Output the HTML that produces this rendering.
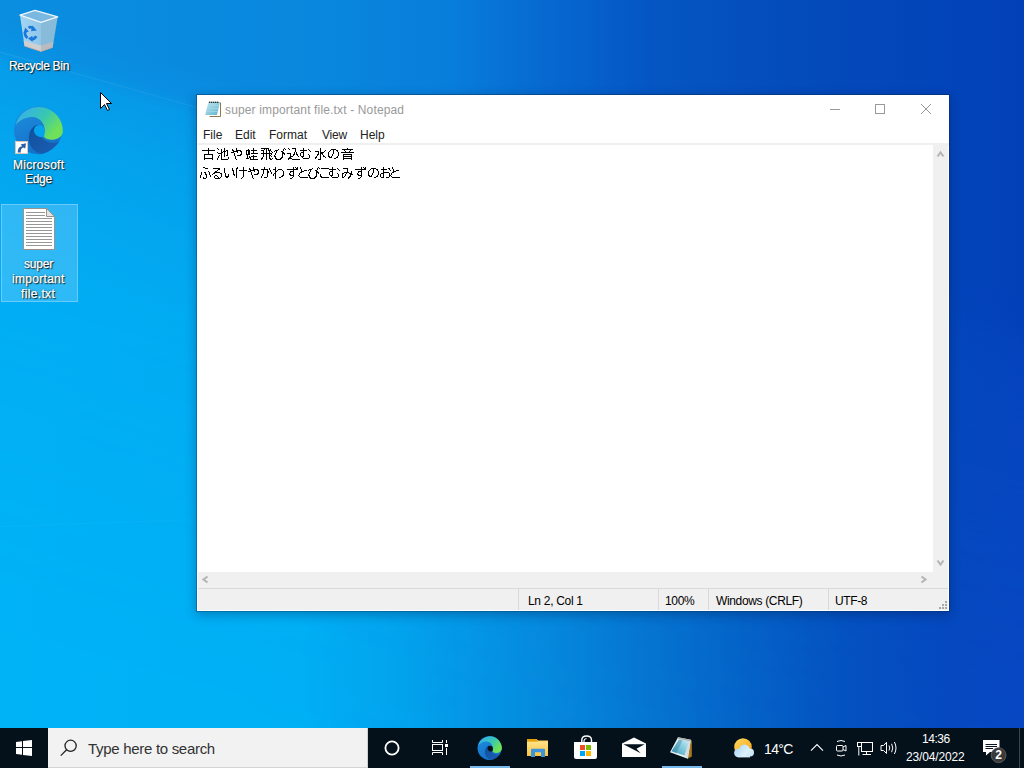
<!DOCTYPE html>
<html><head><meta charset="utf-8">
<style>
*{margin:0;padding:0;box-sizing:border-box}
html,body{width:1024px;height:768px;overflow:hidden}
body{position:relative;font-family:"Liberation Sans",sans-serif;background:#0343b5}
.a{position:absolute}
#wb{position:absolute;left:0;top:0;width:1024px;height:728px;background:linear-gradient(90deg,#00b3f7 0px,#01b0f5 300px,#03a4ee 400px,#0596e6 480px,#0688dc 560px,#0676d2 650px,#0563c8 750px,#0552c2 850px,#0649c0 950px,#0848c4 1024px)}
#wt{position:absolute;left:0;top:0;width:1024px;height:728px;background:linear-gradient(90deg,#0a8ee0 0px,#0988de 300px,#087edb 450px,#0668d0 550px,#0556c4 650px,#044bbb 800px,#0240b8 1024px);-webkit-mask-image:linear-gradient(195.6deg,#000 0px,#000 290px,rgba(0,0,0,.9) 318px,rgba(0,0,0,.62) 336px,rgba(0,0,0,.42) 390px,rgba(0,0,0,.15) 535px,rgba(0,0,0,.05) 720px,rgba(0,0,0,0) 900px);mask-image:linear-gradient(195.6deg,#000 0px,#000 290px,rgba(0,0,0,.9) 318px,rgba(0,0,0,.62) 336px,rgba(0,0,0,.42) 390px,rgba(0,0,0,.15) 535px,rgba(0,0,0,.05) 720px,rgba(0,0,0,0) 900px)}
.lbl{position:absolute;color:#fff;font-size:12px;text-align:center;white-space:nowrap;-webkit-text-stroke:.25px #fff;text-shadow:1px 1px 1px rgba(0,0,0,.9),0 0 2px rgba(0,0,0,.6)}

#taskbar{position:absolute;left:0;top:728px;width:1024px;height:40px;background:#04111b}
.t{position:absolute;white-space:nowrap}
</style></head><body>
<div id="wb"></div><div id="wt"></div>
<div class="a" style="left:-20px;top:46px;width:700px;height:1px;background:linear-gradient(90deg,rgba(255,255,255,.07),rgba(255,255,255,.05) 40%,rgba(255,255,255,0));transform-origin:0 0;transform:rotate(15.7deg)"></div>
<div class="a" style="left:0;top:526px;width:600px;height:1px;background:linear-gradient(90deg,rgba(255,255,255,.03),rgba(255,255,255,.02) 60%,rgba(255,255,255,0));transform-origin:0 0;transform:rotate(-2deg)"></div>

<div class="a" style="left:1px;top:204px;width:77px;height:98px;background:rgba(153,217,255,.30);border:1px solid rgba(153,217,255,.55)"></div>
<!-- desktop labels -->
<svg class="a" style="left:0;top:0" width="200" height="320" viewBox="0 0 200 320">
 <defs>
  <linearGradient id="eg" x1="0.15" y1="0.05" x2="0.95" y2="0.55"><stop offset="0" stop-color="#36b0ea"/><stop offset=".55" stop-color="#38c8b0"/><stop offset="1" stop-color="#6ee05a"/></linearGradient>
  <linearGradient id="eb" x1="0" y1="0" x2="0.4" y2="1"><stop offset="0" stop-color="#1e90e0"/><stop offset="1" stop-color="#1470c8"/></linearGradient>
  <linearGradient id="ed" x1="0" y1="0" x2="1" y2="1"><stop offset="0" stop-color="#114f9c"/><stop offset="1" stop-color="#1b5fb5"/></linearGradient>
  <mask id="ehole">
   <rect x="-2" y="-2" width="52" height="52" fill="#fff"/>
   <path d="M19 24.5 A5.4 5.3 0 0 1 29.6 23.2 C30 27 29.6 29.8 28.2 31.2 C23.5 31.5 19 29 19 24.5 Z" fill="#000"/>
  </mask>
  
  <linearGradient id="rbl" x1="0" y1="0" x2="1" y2="0"><stop offset="0" stop-color="#b2dcf4"/><stop offset="1" stop-color="#9ccbea"/></linearGradient>
 </defs>
 <!-- recycle bin -->
 <path d="M20 15.2 L41 22.3 L41 51.4 L24.5 46 Z" fill="url(#rbl)" opacity=".92"/>
 <path d="M41 22.3 L57.7 16.9 L52.6 47.4 L41 51.4 Z" fill="#8fbdd9" opacity=".95"/>
 <path d="M20 15.2 L35 10.4 L57.7 16.9 L41 22.3 Z" fill="#79b8e0"/>
 <path d="M23.6 40.5 L41 45.5 L41 51.4 L24.5 46 Z" fill="#cdcfd2"/>
 <path d="M41 45.5 L53.4 41.8 L52.6 47.4 L41 51.4 Z" fill="#b8bcc0"/>
 <path d="M24.5 46 L41 51.4 L52.6 47.4" fill="none" stroke="#c8a898" stroke-width=".8"/>
 <path d="M20 15.2 L35 10.4 L57.7 16.9 L41 22.3 Z" fill="none" stroke="#eef6fb" stroke-width="1.3" stroke-linejoin="round"/>
 <g fill="none" stroke="#1a78dc" stroke-width="2.6" stroke-linejoin="round">
  <path d="M28.5 27.8 Q31 26 33.2 28.6"/>
  <path d="M25.3 31.5 Q24.2 35.5 27.6 37.8"/>
  <path d="M31 39.4 Q34.5 39.6 36.2 36.2"/>
 </g>
 <g fill="#1a78dc"><path d="M32.6 25.6 L36.8 30.6 L31 31.2 Z"/><path d="M23.4 33.6 L25.2 27.6 L28.8 31.6 Z"/><path d="M32.5 35.8 L32.6 41.8 L28 38.5 Z"/></g>
 <!-- edge desktop icon -->
 <g transform="translate(15 106)">
   <g mask="url(#ehole)">
    <path d="M43.9 36 A24 24 0 1 0 26.4 47.9 C34 46.5 40 41.5 43.9 36 Z" fill="url(#eb)"/>
    <path d="M0.5 19.4 A24 24 0 0 1 47.8 26.5 C46.5 31.5 41.5 34 36 33.8 C32 33.6 29.2 32 28.2 29.6 C29.8 26.5 30.5 22 28 17.8 C25 12.2 19.5 10.6 14.5 11.2 C8.5 12 3.5 15 0.5 19.4 Z" fill="url(#eg)"/>
    <path d="M20 19.5 C15.5 22.5 13.5 28 13.8 34 C14.3 40.5 19 46 26.4 47.9 C33 46.7 39.5 42 43.9 36 C39 37.6 33.5 37.3 29.5 34 C25 30.5 22.5 25.5 23.5 19 Z" fill="url(#ed)"/>
   </g>
  </g>
 <rect x="15.5" y="141.5" width="12" height="12" fill="#fff" stroke="#d9c6b6" stroke-width="1"/>
 <path d="M17.8 152.6 C17.6 148.5 19.5 146.6 22.2 146.2 L20.6 144.4 L26 143.2 L25.2 148.8 L23.8 147.6 C21.6 148 20.4 149.8 20.8 152.6 Z" fill="#2a5fa8"/>
 <!-- document -->
 <path d="M23.5 208.5 H46.5 L54.5 216.5 V249.5 H23.5 Z" fill="#fff" stroke="#9c928c" stroke-width="1"/>
 <path d="M46.5 208.5 V216.5 H54.5 Z" fill="#e4e4e4" stroke="#9c928c" stroke-width="1" stroke-linejoin="round"/>
 <g stroke="#979797" stroke-width="1.1">
  <path d="M26 212.5 H45 M26 215.5 H45 M26 218.5 H52 M26 221.5 H52 M26 224.5 H52 M26 227.5 H52 M26 230.5 H52 M26 233.5 H52 M26 236.5 H52 M26 239.5 H52 M26 242.5 H52 M26 245.5 H52"/>
 </g>
 <!-- cursor -->
 <path d="M100.5 92.5 V108.5 L104.5 104.5 L107.5 110.5 L109.5 109.5 L106.5 103.5 H111.5 Z" fill="#fff" stroke="#000" stroke-width="1" stroke-linejoin="miter"/>
</svg>

<div class="lbl t" style="left:9px;top:59px;letter-spacing:-.3px">Recycle Bin</div>
<div class="lbl t" style="left:13px;top:158px;letter-spacing:.3px">Microsoft</div>
<div class="lbl t" style="left:25px;top:172px;letter-spacing:-.3px">Edge</div>
<div class="lbl t" style="left:24px;top:257px;letter-spacing:-.2px">super</div>
<div class="lbl t" style="left:12px;top:272px;letter-spacing:.3px">important</div>
<div class="lbl t" style="left:21px;top:287px;letter-spacing:.35px">file.txt</div>


<div class="a" style="left:196px;top:94px;width:754px;height:518px;box-shadow:0 3px 10px rgba(0,20,60,.30)"></div>
<div class="a" style="left:196px;top:94px;width:754px;height:518px;border:1px solid rgba(0,30,70,.42);background:#fff;background-clip:padding-box"></div>
<div class="a" style="left:197px;top:143px;width:752px;height:2px;background:#f0f0f0"></div>
<div class="a" style="left:933px;top:145px;width:15px;height:443px;background:#f0f0f0"></div>
<div class="a" style="left:198px;top:572px;width:750px;height:16px;background:#f0f0f0"></div>
<div class="a" style="left:198px;top:588px;width:750px;height:1px;background:#d9d9d9"></div>
<div class="a" style="left:198px;top:589px;width:750px;height:21px;background:#f0f0f0"></div>
<div class="a" style="left:518px;top:589px;width:1px;height:21px;background:#d9d9d9"></div>
<div class="a" style="left:658px;top:589px;width:1px;height:21px;background:#d9d9d9"></div>
<div class="a" style="left:708px;top:589px;width:1px;height:21px;background:#d9d9d9"></div>
<div class="a" style="left:828px;top:589px;width:1px;height:21px;background:#d9d9d9"></div>
<svg class="a" style="left:0;top:0" width="1024" height="768" viewBox="0 0 1024 768">
 <g fill="none" stroke="#b4b4b4" stroke-width="2">
  <path d="M937.5 156.5 L940.5 152.5 L943.5 156.5"/>
  <path d="M937.5 560.5 L940.5 564.5 L943.5 560.5"/>
  <path d="M207.5 576.5 L203.5 579.5 L207.5 582.5"/>
  <path d="M921.5 576.5 L925.5 579.5 L921.5 582.5"/>
 </g>
 <g fill="#a8a8a8">
  <rect x="945" y="601" width="2" height="2"/>
  <rect x="942" y="604" width="2" height="2"/><rect x="945" y="604" width="2" height="2"/>
  <rect x="939" y="607" width="2" height="2"/><rect x="942" y="607" width="2" height="2"/><rect x="945" y="607" width="2" height="2"/>
 </g>
 <g fill="none" stroke="#999" stroke-width="1">
  <path d="M830 109.5 H840"/>
  <rect x="875.5" y="104.5" width="9" height="9"/>
  <path d="M921 104 L931 114 M931 104 L921 114"/>
 </g>
</svg>

<svg id="jp" class="a" style="left:0;top:0" width="1024" height="768" viewBox="0 0 1024 768" shape-rendering="crispEdges"><path fill="#000" d="M208 148h1v1h-1zM217 148h1v1h-1zM224 148h1v1h-1zM236 148h1v1h-1zM253 148h1v1h-1zM261 148h8v1h-8zM284 148h1v1h-1zM288 148h1v1h-1zM292 148h4v1h-4zM303 148h1v1h-1zM320 148h1v1h-1zM347 148h1v1h-1zM208 149h1v1h-1zM218 149h1v1h-1zM221 149h1v1h-1zM224 149h1v1h-1zM232 149h1v1h-1zM236 149h1v1h-1zM248 149h1v1h-1zM253 149h1v1h-1zM264 149h1v1h-1zM266 149h1v1h-1zM268 149h1v1h-1zM270 149h1v1h-1zM278 149h1v1h-1zM283 149h1v1h-1zM285 149h1v1h-1zM289 149h1v1h-1zM295 149h1v1h-1zM303 149h1v1h-1zM308 149h1v1h-1zM320 149h1v1h-1zM331 149h5v1h-5zM342 149h11v1h-11zM202 150h13v1h-13zM221 150h1v1h-1zM224 150h1v1h-1zM226 150h2v1h-2zM232 150h2v1h-2zM236 150h5v1h-5zM246 150h4v1h-4zM251 150h6v1h-6zM261 150h3v1h-3zM266 150h1v1h-1zM268 150h3v1h-3zM275 150h3v1h-3zM283 150h1v1h-1zM295 150h1v1h-1zM300 150h7v1h-7zM309 150h1v1h-1zM320 150h1v1h-1zM325 150h1v1h-1zM330 150h1v1h-1zM333 150h1v1h-1zM336 150h2v1h-2zM344 150h1v1h-1zM350 150h1v1h-1zM208 151h1v1h-1zM221 151h1v1h-1zM223 151h3v1h-3zM227 151h1v1h-1zM233 151h5v1h-5zM240 151h2v1h-2zM246 151h1v1h-1zM248 151h2v1h-2zM253 151h1v1h-1zM263 151h1v1h-1zM266 151h1v1h-1zM269 151h1v1h-1zM271 151h1v1h-1zM274 151h1v1h-1zM276 151h1v1h-1zM281 151h2v1h-2zM295 151h1v1h-1zM303 151h1v1h-1zM310 151h1v1h-1zM315 151h4v1h-4zM320 151h1v1h-1zM324 151h1v1h-1zM329 151h1v1h-1zM333 151h1v1h-1zM337 151h1v1h-1zM345 151h1v1h-1zM349 151h1v1h-1zM208 152h1v1h-1zM217 152h1v1h-1zM221 152h2v1h-2zM224 152h1v1h-1zM227 152h1v1h-1zM231 152h3v1h-3zM237 152h1v1h-1zM241 152h1v1h-1zM246 152h1v1h-1zM248 152h2v1h-2zM253 152h1v1h-1zM263 152h1v1h-1zM266 152h1v1h-1zM269 152h1v1h-1zM272 152h1v1h-1zM276 152h1v1h-1zM282 152h2v1h-2zM294 152h1v1h-1zM296 152h1v1h-1zM301 152h3v1h-3zM318 152h1v1h-1zM320 152h4v1h-4zM328 152h1v1h-1zM333 152h1v1h-1zM338 152h1v1h-1zM341 152h13v1h-13zM208 153h1v1h-1zM218 153h4v1h-4zM224 153h1v1h-1zM227 153h1v1h-1zM234 153h1v1h-1zM241 153h1v1h-1zM246 153h1v1h-1zM248 153h2v1h-2zM251 153h7v1h-7zM261 153h11v1h-11zM275 153h1v1h-1zM282 153h3v1h-3zM287 153h4v1h-4zM294 153h1v1h-1zM296 153h1v1h-1zM300 153h1v1h-1zM303 153h1v1h-1zM318 153h1v1h-1zM320 153h3v1h-3zM328 153h1v1h-1zM333 153h1v1h-1zM338 153h1v1h-1zM204 154h9v1h-9zM221 154h1v1h-1zM224 154h1v1h-1zM227 154h1v1h-1zM234 154h1v1h-1zM240 154h2v1h-2zM246 154h4v1h-4zM263 154h1v1h-1zM266 154h1v1h-1zM269 154h1v1h-1zM271 154h1v1h-1zM275 154h1v1h-1zM282 154h1v1h-1zM284 154h1v1h-1zM290 154h1v1h-1zM293 154h2v1h-2zM296 154h2v1h-2zM300 154h1v1h-1zM303 154h1v1h-1zM308 154h1v1h-1zM317 154h2v1h-2zM320 154h1v1h-1zM322 154h1v1h-1zM328 154h1v1h-1zM332 154h1v1h-1zM338 154h1v1h-1zM343 154h9v1h-9zM204 155h1v1h-1zM212 155h1v1h-1zM219 155h1v1h-1zM221 155h1v1h-1zM224 155h1v1h-1zM226 155h2v1h-2zM234 155h1v1h-1zM237 155h4v1h-4zM247 155h1v1h-1zM253 155h1v1h-1zM263 155h1v1h-1zM266 155h1v1h-1zM269 155h2v1h-2zM274 155h1v1h-1zM282 155h1v1h-1zM290 155h1v1h-1zM293 155h1v1h-1zM297 155h1v1h-1zM300 155h1v1h-1zM303 155h1v1h-1zM309 155h1v1h-1zM317 155h1v1h-1zM320 155h1v1h-1zM323 155h1v1h-1zM328 155h1v1h-1zM332 155h1v1h-1zM338 155h1v1h-1zM343 155h1v1h-1zM351 155h1v1h-1zM204 156h1v1h-1zM212 156h1v1h-1zM218 156h1v1h-1zM221 156h1v1h-1zM224 156h1v1h-1zM235 156h1v1h-1zM247 156h1v1h-1zM249 156h1v1h-1zM251 156h6v1h-6zM263 156h1v1h-1zM266 156h1v1h-1zM269 156h1v1h-1zM271 156h1v1h-1zM274 156h2v1h-2zM282 156h1v1h-1zM290 156h3v1h-3zM298 156h1v1h-1zM301 156h3v1h-3zM309 156h1v1h-1zM316 156h1v1h-1zM320 156h1v1h-1zM323 156h2v1h-2zM328 156h2v1h-2zM331 156h1v1h-1zM337 156h1v1h-1zM343 156h9v1h-9zM204 157h1v1h-1zM212 157h1v1h-1zM218 157h1v1h-1zM221 157h1v1h-1zM228 157h1v1h-1zM235 157h1v1h-1zM247 157h1v1h-1zM249 157h2v1h-2zM253 157h1v1h-1zM262 157h1v1h-1zM266 157h1v1h-1zM269 157h1v1h-1zM275 157h1v1h-1zM281 157h2v1h-2zM289 157h2v1h-2zM302 157h1v1h-1zM309 157h1v1h-1zM315 157h2v1h-2zM320 157h1v1h-1zM325 157h1v1h-1zM329 157h3v1h-3zM336 157h2v1h-2zM343 157h1v1h-1zM351 157h1v1h-1zM204 158h9v1h-9zM217 158h1v1h-1zM221 158h1v1h-1zM228 158h1v1h-1zM235 158h1v1h-1zM246 158h3v1h-3zM250 158h1v1h-1zM253 158h1v1h-1zM261 158h2v1h-2zM266 158h1v1h-1zM269 158h2v1h-2zM272 158h1v1h-1zM275 158h2v1h-2zM280 158h2v1h-2zM288 158h4v1h-4zM303 158h6v1h-6zM315 158h1v1h-1zM320 158h1v1h-1zM334 158h2v1h-2zM343 158h9v1h-9zM204 159h1v1h-1zM212 159h1v1h-1zM217 159h1v1h-1zM221 159h7v1h-7zM236 159h1v1h-1zM250 159h8v1h-8zM261 159h1v1h-1zM266 159h1v1h-1zM270 159h2v1h-2zM276 159h5v1h-5zM288 159h1v1h-1zM292 159h8v1h-8zM318 159h3v1h-3zM343 159h1v1h-1zM351 159h1v1h-1zM203 167h2v1h-2zM237 167h1v1h-1zM243 167h1v1h-1zM253 167h1v1h-1zM264 167h1v1h-1zM275 167h1v1h-1zM293 167h1v1h-1zM295 167h1v1h-1zM297 167h1v1h-1zM300 167h1v1h-1zM318 167h1v1h-1zM332 167h1v1h-1zM361 167h1v1h-1zM363 167h1v1h-1zM365 167h1v1h-1zM383 167h1v1h-1zM392 167h1v1h-1zM205 168h3v1h-3zM213 168h7v1h-7zM224 168h1v1h-1zM232 168h1v1h-1zM236 168h2v1h-2zM243 168h1v1h-1zM249 168h1v1h-1zM253 168h1v1h-1zM264 168h1v1h-1zM269 168h1v1h-1zM275 168h1v1h-1zM293 168h1v1h-1zM296 168h2v1h-2zM300 168h1v1h-1zM312 168h1v1h-1zM317 168h1v1h-1zM319 168h1v1h-1zM321 168h8v1h-8zM332 168h1v1h-1zM337 168h1v1h-1zM343 168h5v1h-5zM361 168h1v1h-1zM364 168h2v1h-2zM371 168h5v1h-5zM383 168h1v1h-1zM388 168h2v1h-2zM392 168h1v1h-1zM218 169h2v1h-2zM224 169h1v1h-1zM232 169h1v1h-1zM236 169h1v1h-1zM243 169h1v1h-1zM249 169h2v1h-2zM253 169h5v1h-5zM261 169h7v1h-7zM269 169h1v1h-1zM273 169h3v1h-3zM278 169h4v1h-4zM287 169h11v1h-11zM301 169h1v1h-1zM309 169h3v1h-3zM317 169h1v1h-1zM329 169h7v1h-7zM338 169h1v1h-1zM347 169h1v1h-1zM355 169h11v1h-11zM370 169h1v1h-1zM373 169h1v1h-1zM376 169h2v1h-2zM381 169h6v1h-6zM389 169h1v1h-1zM393 169h1v1h-1zM217 170h1v1h-1zM224 170h1v1h-1zM232 170h2v1h-2zM236 170h1v1h-1zM239 170h8v1h-8zM250 170h5v1h-5zM257 170h2v1h-2zM263 170h1v1h-1zM267 170h1v1h-1zM270 170h1v1h-1zM275 170h1v1h-1zM277 170h1v1h-1zM282 170h1v1h-1zM293 170h1v1h-1zM301 170h1v1h-1zM304 170h3v1h-3zM308 170h1v1h-1zM310 170h1v1h-1zM315 170h2v1h-2zM332 170h1v1h-1zM339 170h1v1h-1zM347 170h1v1h-1zM361 170h1v1h-1zM369 170h1v1h-1zM373 170h1v1h-1zM377 170h1v1h-1zM383 170h1v1h-1zM390 170h1v1h-1zM393 170h1v1h-1zM396 170h3v1h-3zM208 171h1v1h-1zM215 171h2v1h-2zM224 171h1v1h-1zM233 171h1v1h-1zM236 171h1v1h-1zM243 171h1v1h-1zM248 171h3v1h-3zM254 171h1v1h-1zM258 171h1v1h-1zM263 171h1v1h-1zM267 171h2v1h-2zM270 171h1v1h-1zM275 171h2v1h-2zM283 171h1v1h-1zM290 171h4v1h-4zM301 171h3v1h-3zM310 171h1v1h-1zM316 171h2v1h-2zM330 171h3v1h-3zM347 171h1v1h-1zM351 171h1v1h-1zM358 171h4v1h-4zM368 171h1v1h-1zM373 171h1v1h-1zM378 171h1v1h-1zM383 171h1v1h-1zM393 171h3v1h-3zM201 172h1v1h-1zM204 172h2v1h-2zM209 172h1v1h-1zM214 172h6v1h-6zM224 172h1v1h-1zM233 172h1v1h-1zM236 172h1v1h-1zM243 172h1v1h-1zM251 172h1v1h-1zM258 172h1v1h-1zM263 172h1v1h-1zM267 172h2v1h-2zM271 172h1v1h-1zM275 172h1v1h-1zM283 172h1v1h-1zM290 172h1v1h-1zM293 172h1v1h-1zM300 172h2v1h-2zM309 172h1v1h-1zM316 172h3v1h-3zM329 172h1v1h-1zM332 172h1v1h-1zM344 172h5v1h-5zM351 172h1v1h-1zM358 172h1v1h-1zM361 172h1v1h-1zM368 172h1v1h-1zM373 172h1v1h-1zM378 172h1v1h-1zM383 172h6v1h-6zM392 172h2v1h-2zM201 173h1v1h-1zM205 173h1v1h-1zM209 173h1v1h-1zM213 173h2v1h-2zM220 173h2v1h-2zM225 173h1v1h-1zM233 173h1v1h-1zM236 173h1v1h-1zM243 173h1v1h-1zM251 173h1v1h-1zM257 173h2v1h-2zM263 173h1v1h-1zM267 173h1v1h-1zM271 173h1v1h-1zM274 173h2v1h-2zM283 173h1v1h-1zM289 173h1v1h-1zM293 173h1v1h-1zM299 173h1v1h-1zM309 173h1v1h-1zM316 173h1v1h-1zM318 173h1v1h-1zM329 173h1v1h-1zM332 173h1v1h-1zM337 173h1v1h-1zM342 173h2v1h-2zM346 173h1v1h-1zM349 173h3v1h-3zM357 173h1v1h-1zM361 173h1v1h-1zM368 173h1v1h-1zM372 173h1v1h-1zM378 173h1v1h-1zM381 173h3v1h-3zM389 173h1v1h-1zM391 173h1v1h-1zM201 174h1v1h-1zM205 174h2v1h-2zM209 174h1v1h-1zM212 174h1v1h-1zM221 174h1v1h-1zM225 174h1v1h-1zM228 174h1v1h-1zM233 174h2v1h-2zM236 174h1v1h-1zM243 174h1v1h-1zM251 174h1v1h-1zM254 174h4v1h-4zM262 174h1v1h-1zM267 174h1v1h-1zM273 174h1v1h-1zM275 174h1v1h-1zM283 174h1v1h-1zM289 174h2v1h-2zM293 174h1v1h-1zM299 174h1v1h-1zM308 174h1v1h-1zM316 174h1v1h-1zM320 174h1v1h-1zM329 174h1v1h-1zM332 174h1v1h-1zM338 174h1v1h-1zM342 174h1v1h-1zM345 174h1v1h-1zM350 174h3v1h-3zM357 174h2v1h-2zM361 174h1v1h-1zM368 174h1v1h-1zM372 174h1v1h-1zM378 174h1v1h-1zM380 174h1v1h-1zM383 174h1v1h-1zM389 174h1v1h-1zM391 174h1v1h-1zM200 175h1v1h-1zM206 175h1v1h-1zM210 175h1v1h-1zM215 175h2v1h-2zM221 175h1v1h-1zM225 175h1v1h-1zM228 175h1v1h-1zM234 175h1v1h-1zM236 175h1v1h-1zM243 175h1v1h-1zM252 175h1v1h-1zM262 175h1v1h-1zM267 175h1v1h-1zM273 175h1v1h-1zM275 175h1v1h-1zM282 175h2v1h-2zM290 175h4v1h-4zM298 175h1v1h-1zM308 175h2v1h-2zM316 175h1v1h-1zM320 175h1v1h-1zM330 175h3v1h-3zM338 175h1v1h-1zM342 175h1v1h-1zM345 175h1v1h-1zM350 175h1v1h-1zM358 175h4v1h-4zM368 175h2v1h-2zM371 175h1v1h-1zM377 175h1v1h-1zM380 175h1v1h-1zM383 175h1v1h-1zM389 175h2v1h-2zM200 176h1v1h-1zM206 176h1v1h-1zM210 176h1v1h-1zM214 176h1v1h-1zM217 176h1v1h-1zM221 176h1v1h-1zM225 176h4v1h-4zM236 176h1v1h-1zM243 176h1v1h-1zM252 176h1v1h-1zM261 176h1v1h-1zM267 176h1v1h-1zM275 176h1v1h-1zM281 176h2v1h-2zM293 176h1v1h-1zM299 176h1v1h-1zM309 176h1v1h-1zM315 176h2v1h-2zM320 176h2v1h-2zM331 176h1v1h-1zM338 176h1v1h-1zM342 176h1v1h-1zM344 176h1v1h-1zM349 176h2v1h-2zM361 176h1v1h-1zM369 176h3v1h-3zM376 176h2v1h-2zM380 176h1v1h-1zM383 176h1v1h-1zM389 176h1v1h-1zM391 176h1v1h-1zM200 177h1v1h-1zM203 177h1v1h-1zM206 177h1v1h-1zM214 177h1v1h-1zM218 177h1v1h-1zM220 177h1v1h-1zM226 177h2v1h-2zM236 177h1v1h-1zM242 177h1v1h-1zM252 177h1v1h-1zM261 177h1v1h-1zM264 177h3v1h-3zM275 177h1v1h-1zM279 177h2v1h-2zM292 177h1v1h-1zM300 177h8v1h-8zM309 177h2v1h-2zM314 177h2v1h-2zM321 177h8v1h-8zM332 177h6v1h-6zM342 177h2v1h-2zM348 177h2v1h-2zM360 177h1v1h-1zM374 177h2v1h-2zM381 177h3v1h-3zM386 177h3v1h-3zM392 177h8v1h-8zM203 178h3v1h-3zM215 178h5v1h-5zM241 178h1v1h-1zM253 178h1v1h-1zM275 178h1v1h-1zM290 178h2v1h-2zM310 178h5v1h-5zM348 178h1v1h-1zM358 178h2v1h-2z"/></svg>
<svg class="a" style="left:200px;top:98px" width="24" height="22" viewBox="200 98 24 22">
 <defs><linearGradient id="npt" x1="0" y1="0" x2="1" y2="1"><stop offset="0" stop-color="#c4e8f2"/><stop offset=".6" stop-color="#86c8dc"/><stop offset="1" stop-color="#5fb0c8"/></linearGradient></defs>
 <path d="M209 102 H220.5 V116.5 H209 Z" fill="#fff"/>
 <path d="M220.5 102.5 V116.5 H209.5" fill="none" stroke="#8c7a4a" stroke-width="1"/>
 <path d="M208.5 102 L220 102 L217 115 L205.2 115 Z" fill="url(#npt)"/>
 <g stroke="#a8d8e6" stroke-width=".8" opacity=".9"><path d="M208 105.5 H219 M207.3 108.5 H218.4 M206.6 111.5 H217.7"/></g>
 <g fill="#333"><rect x="209" y="101.6" width="1.4" height="1.4"/><rect x="211" y="101.6" width="1.4" height="1.4"/><rect x="213" y="101.6" width="1.4" height="1.4"/><rect x="215" y="101.6" width="1.4" height="1.4"/><rect x="217" y="101.6" width="1.4" height="1.4"/></g>
</svg>
<div class="t" style="left:225px;top:103px;font-size:12px;letter-spacing:.15px;color:#999">super important file.txt - Notepad</div>
<div class="t" style="left:203px;top:128px;font-size:12px;color:#222">File</div>
<div class="t" style="left:235px;top:128px;font-size:12px;color:#222">Edit</div>
<div class="t" style="left:269px;top:128px;font-size:12px;color:#222">Format</div>
<div class="t" style="left:322px;top:128px;letter-spacing:-.2px;font-size:12px;color:#222">View</div>
<div class="t" style="left:360px;top:128px;font-size:12px;color:#222">Help</div>
<div class="t" style="left:528px;top:594px;font-size:12px;letter-spacing:-.3px;color:#000">Ln 2, Col 1</div>
<div class="t" style="left:665px;top:594px;font-size:12px;letter-spacing:-.35px;color:#000">100%</div>
<div class="t" style="left:716px;top:594px;font-size:12px;letter-spacing:-.35px;color:#000">Windows (CRLF)</div>
<div class="t" style="left:835px;top:594px;font-size:12px;letter-spacing:-.4px;color:#000">UTF-8</div>

<div id="taskbar"></div>
<div class="a" style="left:48px;top:728px;width:320px;height:40px;background:#f2f2f2;border-right:1px solid #cfcfcf;border-bottom:1px solid #d4d4d4"></div>
<svg class="a" style="left:0;top:728px" width="1024" height="40" viewBox="0 728 1024 40">
 <!-- windows logo -->
 <g fill="#fff">
  <path d="M16 742 L22 741.2 V747 H16 Z"/>
  <path d="M23 741 L32 740 V747 H23 Z"/>
  <path d="M16 748 H22 V754.8 L16 754 Z"/>
  <path d="M23 748 H32 V756 L23 755 Z"/>
 </g>
 <!-- search magnifier -->
 <g fill="none" stroke="#222" stroke-width="1.3">
  <circle cx="70.6" cy="745.8" r="5.6"/>
  <path d="M66.6 749.8 L60.8 755.6"/>
 </g>
 <!-- cortana -->
 <circle cx="392" cy="748" r="6.6" fill="none" stroke="#fff" stroke-width="1.8"/>
 <!-- task view -->
 <g fill="none" stroke="#fff" stroke-width="1">
  <path d="M432.5 740 V742.5 H442.5 V740"/>
  <rect x="432.5" y="744.5" width="10" height="6"/>
  <path d="M432.5 755 V752.5 H442.5 V755"/>
  <path d="M446.5 740 V743 M446.5 748 V755"/>
 </g>
 <rect x="445" y="744" width="3" height="3" fill="#fff"/>
 <!-- underlines -->
 <rect x="470" y="766" width="40" height="2" fill="#76b9ed"/>
 <rect x="662" y="766" width="40" height="2" fill="#76b9ed"/>
 <g transform="translate(478 736) scale(0.5)">
   <g mask="url(#ehole)">
    <path d="M43.9 36 A24 24 0 1 0 26.4 47.9 C34 46.5 40 41.5 43.9 36 Z" fill="url(#eb)"/>
    <path d="M0.5 19.4 A24 24 0 0 1 47.8 26.5 C46.5 31.5 41.5 34 36 33.8 C32 33.6 29.2 32 28.2 29.6 C29.8 26.5 30.5 22 28 17.8 C25 12.2 19.5 10.6 14.5 11.2 C8.5 12 3.5 15 0.5 19.4 Z" fill="url(#eg)"/>
    <path d="M20 19.5 C15.5 22.5 13.5 28 13.8 34 C14.3 40.5 19 46 26.4 47.9 C33 46.7 39.5 42 43.9 36 C39 37.6 33.5 37.3 29.5 34 C25 30.5 22.5 25.5 23.5 19 Z" fill="url(#ed)"/>
   </g>
  </g>
 <!-- explorer -->
 <path d="M527 739 H536.5 L538 740.5 H548 V756 H527 Z" fill="#fcd462"/>
 <path d="M527 739 H536.5 L538 741.8 H527 Z" fill="#e4a10c"/>
 <rect x="527" y="741.8" width="21" height="14.2" fill="url(#fold)"/>
 <path d="M531 749.5 Q531 748.8 531.7 748.8 H544.3 Q545 748.8 545 749.5 V757 H541 V752.2 H535 V757 H531 Z" fill="#3e93df"/>
 <!-- store -->
 <path d="M574 742 H597 V757 Q597 759 595 759 H576 Q574 759 574 757 Z" fill="#fff"/>
 <path d="M581.8 742 V740 Q581.8 736 586.5 736 Q591.5 736 591.5 740 V742" fill="none" stroke="#fff" stroke-width="1.4"/>
 <path d="M584 742 V740.5 Q584.5 738.6 586.5 738.5" fill="none" stroke="#fff" stroke-width="1.1"/>
 <rect x="580" y="745" width="5" height="5" fill="#f25022"/>
 <rect x="586" y="745" width="5" height="5" fill="#7fba00"/>
 <rect x="580" y="751" width="5" height="5" fill="#00a4ef"/>
 <rect x="586" y="751" width="5" height="5" fill="#ffb900"/>
 <!-- mail -->
 <path d="M622 743.5 L634 737.6 L646 743.5 V757 H622 Z" fill="#fff"/>
 <path d="M623.3 744.3 H644.6 L636.5 748.7 L640.7 753.3 Z" fill="#04111b"/>
 <!-- taskbar notepad -->
 <path d="M680 739.5 L691.8 740.5 V756.5 L688 758.5 Z" fill="#a87820"/>
 <path d="M678 737.2 L690.8 739.8 L687.8 758.8 L670 752.2 Z" fill="#e8f0f2"/>
 <path d="M679 739.5 L689.6 741.6 L684.5 755.6 L671.5 751.2 Z" fill="url(#npb)"/>
 <path d="M679 739.5 L682.5 740.2 L676.5 753.3 L671.5 751.2 Z" fill="#1f6f8c" opacity=".3"/>
 <path d="M689.6 741.6 L690.8 739.8 L687.8 758.8 L684.5 755.6 Z" fill="#d4dde2"/>
 <path d="M678 737.2 L690.8 739.8 L690.4 741.4 L677.4 738.8 Z" fill="#aab2b4"/>
 <!-- weather -->
 <circle cx="743" cy="747" r="8.8" fill="url(#sun)"/>
 <g fill="url(#cloud)">
  <circle cx="744.5" cy="750" r="5.4"/>
  <circle cx="738.3" cy="753" r="4.2"/>
  <circle cx="750" cy="752.6" r="4"/>
  <rect x="738.3" y="752" width="11.7" height="5.4"/>
 </g>
 <!-- 14C drawn as text separately -->
 <!-- chevron -->
 <path d="M811 750.7 L817 744.5 L823 750.7" fill="none" stroke="#fff" stroke-width="1.1"/>
 <!-- meet now -->
 <g fill="none" stroke="#fff" stroke-width="1">
  <rect x="836.5" y="745.5" width="6.5" height="5.5" rx="1"/>
  <path d="M843 747 L846 745.5 V751 L843 749.5"/>
  <path d="M837 741.5 Q841 739.5 845 741.5"/>
  <path d="M837 755 Q841 757 845 755"/>
 </g>
 <!-- network -->
 <g fill="none" stroke="#fff" stroke-width="1">
  <rect x="861.5" y="742.5" width="11" height="9"/>
  <path d="M866.5 752 V755 M862.5 754.5 H871"/>
  <rect x="857.5" y="742.5" width="4" height="4"/>
  <path d="M858.8 747 V755.5"/>
 </g>
 <!-- speaker -->
 <g fill="none" stroke="#fff" stroke-width="1">
  <path d="M881 745.5 H883.5 L886.5 742.3 V753.5 L883.5 750.5 H881 Z"/>
  <path d="M889 745.5 Q890.5 748 889 750.5"/>
  <path d="M891.6 743.8 Q894 748 891.6 752.2"/>
  <path d="M894.4 742 Q897.6 748 894.4 754"/>
 </g>
 <!-- notification -->
 <path d="M983 740 H999.5 V752 H990 L986 755.5 V752 H983 Z" fill="#fff"/>
 <g stroke="#0a1621" stroke-width="1"><path d="M985.5 744.5 H997 M985.5 746.5 H997 M985.5 748.5 H993"/></g>
 <circle cx="998.6" cy="755.2" r="7.4" fill="#3a3a3a" stroke="#5a5a5a" stroke-width="1"/>
 <rect x="1019" y="728" width="1" height="40" fill="#3a4550"/>
 <defs>
  <linearGradient id="fold" x1="0" y1="0" x2="0" y2="1"><stop offset="0" stop-color="#ffe28a"/><stop offset="1" stop-color="#fbc43a"/></linearGradient>
  <linearGradient id="npb" x1="0" y1="1" x2="1" y2="0"><stop offset="0" stop-color="#3a9ab8"/><stop offset=".55" stop-color="#86cadd"/><stop offset="1" stop-color="#d0eef6"/></linearGradient>
  <linearGradient id="sun" x1="0" y1="0" x2="1" y2="1"><stop offset="0" stop-color="#fdd860"/><stop offset=".6" stop-color="#fbb830"/><stop offset="1" stop-color="#f28a00"/></linearGradient>
  <linearGradient id="cloud" gradientUnits="userSpaceOnUse" x1="736" y1="745" x2="752" y2="758"><stop offset="0" stop-color="#aad6f6"/><stop offset=".6" stop-color="#dcefFb"/><stop offset="1" stop-color="#c4e2f6"/></linearGradient>
 </defs>
</svg>
<div class="t" style="left:993px;top:748px;font-size:12px;font-weight:bold;color:#fff;width:11px;text-align:center">2</div>

<div class="t" style="left:88px;top:740px;font-size:15px;letter-spacing:-.3px;color:#333">Type here to search</div>
<div class="t" style="left:764px;top:741px;font-size:14px;letter-spacing:-.6px;color:#fff">14°C</div>
<div class="t" style="left:922px;top:732px;font-size:12px;letter-spacing:-.45px;color:#fff">14:36</div>
<div class="t" style="left:906px;top:750px;font-size:12px;letter-spacing:-.15px;color:#fff">23/04/2022</div>
</body></html>
